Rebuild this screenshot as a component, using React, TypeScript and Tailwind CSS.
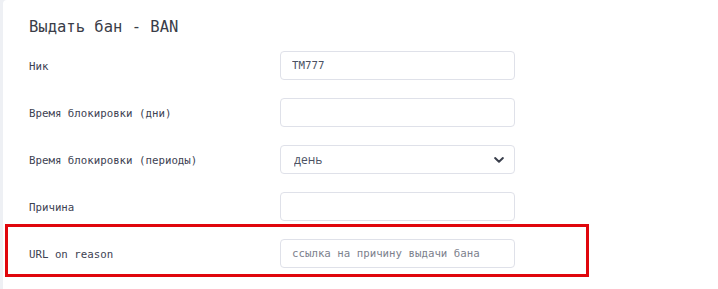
import { useState } from 'react';

const mono = { fontFamily: '"DejaVu Sans Mono", "Liberation Mono", monospace' };

export default function App() {
  const [nick, setNick] = useState('TM777');
  const [days, setDays] = useState('');
  const [period, setPeriod] = useState('day');
  const [reason, setReason] = useState('');
  const [url, setUrl] = useState('');

  const inputCls =
    'w-[235px] h-[29px] rounded-[4px] border border-[#dfe1e9] bg-white px-[11px] text-[10.75px] text-[#4b5263] outline-none placeholder:text-[#7c818d]';
  const labelCls = 'w-[251px] pt-[3px] text-[10.75px] text-[#3d4252]';

  return (
    <div className="h-[289px] w-[718px] overflow-hidden bg-[#eef0f4] pl-[3px]" style={mono}>
      <div className="h-full rounded-tl-[4px] bg-white pl-[26px] pt-[17px]">
        <h2 className="h-[20px] text-[15.5px] leading-[20px] text-[#3a3d48]">Выдать бан - BAN</h2>

        <div className="mt-[14px] flex flex-col gap-[18px]">
          <div className="flex items-center">
            <label className={labelCls}>Ник</label>
            <input value={nick} onChange={(e) => setNick(e.target.value)} className={inputCls} style={mono} />
          </div>

          <div className="flex items-center">
            <label className={labelCls}>Время блокировки (дни)</label>
            <input value={days} onChange={(e) => setDays(e.target.value)} className={inputCls} style={mono} />
          </div>

          <div className="flex items-center">
            <label className={labelCls}>Время блокировки (периоды)</label>
            <div className="relative">
              <select
                value={period}
                onChange={(e) => setPeriod(e.target.value)}
                className="h-[29px] w-[235px] appearance-none rounded-[4px] border border-[#dfe1e9] bg-white pl-[13px] text-[12px] text-[#4b5263] outline-none"
                style={{ fontFamily: '"Open Sans", "Liberation Sans", sans-serif' }}
              >
                <option value="day">день</option>
                <option value="week">неделя</option>
                <option value="month">месяц</option>
              </select>
              {/* стрелка селекта */}
              <svg
                className="pointer-events-none absolute right-[11px] top-[12px] h-[6px] w-[10px]"
                viewBox="0 0 10 6"
                fill="none"
              >
                <path d="M1.1 1.1 5 4.8 8.9 1.1" stroke="#3a3f4c" strokeWidth={2} strokeLinecap="round" strokeLinejoin="round" />
              </svg>
            </div>
          </div>

          <div className="flex items-center">
            <label className={labelCls}>Причина</label>
            <input value={reason} onChange={(e) => setReason(e.target.value)} className={inputCls} style={mono} />
          </div>

          {/* выделенная строка */}
          <div className="relative flex items-center">
            <label className={labelCls}>URL on reason</label>
            <input
              value={url}
              onChange={(e) => setUrl(e.target.value)}
              placeholder="ссылка на причину выдачи бана"
              className={inputCls}
              style={mono}
            />
            <div className="pointer-events-none absolute left-[-24px] top-[-15px] h-[53px] w-[584px] border-[3px] border-[#e0060c]" />
          </div>
        </div>
      </div>
    </div>
  );
}
